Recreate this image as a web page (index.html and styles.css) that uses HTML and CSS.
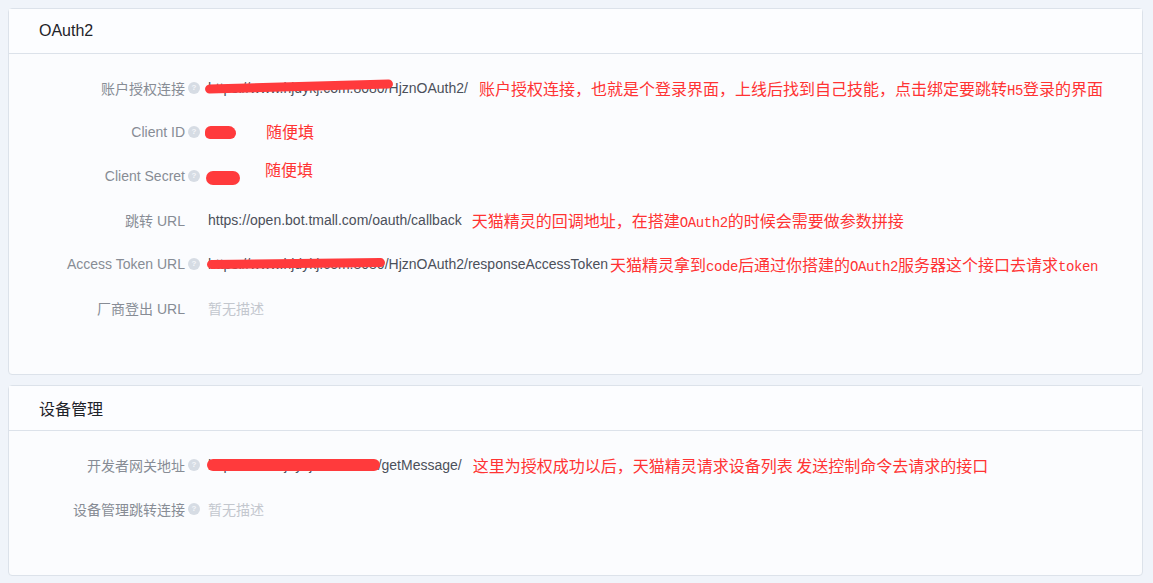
FILE: index.html
```html
<!DOCTYPE html>
<html lang="zh-CN">
<head>
<meta charset="utf-8">
<title>OAuth2</title>
<link rel="stylesheet" href="styles.css">
</head>
<body>
<div class="page">
  <section class="card">
    <div class="card-head">OAuth2</div>
    <div class="card-body">
      <div class="row">
        <div class="label">账户授权连接</div><span class="help">?</span>
        <div class="value"><span class="masked">https://www.hjdykj.com:8080/HjznOAuth2/<i class="scribble s1"></i></span></div>
        <div class="note n1">账户授权连接，也就是个登录界面，上线后找到自己技能，点击绑定要跳转<span class="mono">H5</span>登录的界面</div>
      </div>
      <div class="row">
        <div class="label">Client ID</div><span class="help">?</span>
        <div class="value"><span class="masked blank"><i class="scribble s2"></i></span></div>
        <div class="note n2">随便填</div>
      </div>
      <div class="row">
        <div class="label">Client Secret</div><span class="help">?</span>
        <div class="value"><span class="masked blank"><i class="scribble s3"></i></span></div>
        <div class="note n3">随便填</div>
      </div>
      <div class="row">
        <div class="label">跳转 URL</div><span class="help empty"></span>
        <div class="value">https://open.bot.tmall.com/oauth/callback</div>
        <div class="note n4">天猫精灵的回调地址，在搭建<span class="mono">OAuth2</span>的时候会需要做参数拼接</div>
      </div>
      <div class="row">
        <div class="label">Access Token URL</div><span class="help">?</span>
        <div class="value"><span class="masked">https://www.hjdykj.com:8080<i class="scribble s5"></i></span>/HjznOAuth2/responseAccessToken</div>
        <div class="note n5">天猫精灵拿到<span class="mono">code</span>后通过你搭建的<span class="mono">OAuth2</span>服务器这个接口去请求<span class="mono">token</span></div>
      </div>
      <div class="row">
        <div class="label">厂商登出 URL</div><span class="help empty"></span>
        <div class="value placeholder">暂无描述</div>
      </div>
    </div>
  </section>

  <section class="card">
    <div class="card-head">设备管理</div>
    <div class="card-body">
      <div class="row">
        <div class="label">开发者网关地址</div><span class="help">?</span>
        <div class="value"><span class="masked">http://www.hjdykj.com:8080<i class="scribble s6"></i></span>/getMessage/</div>
        <div class="note n6">这里为授权成功以后，天猫精灵请求设备列表 发送控制命令去请求的接口</div>
      </div>
      <div class="row">
        <div class="label">设备管理跳转连接</div><span class="help">?</span>
        <div class="value placeholder">暂无描述</div>
      </div>
    </div>
  </section>
</div>
</body>
</html>
```

FILE: styles.css
```css
html, body {
  margin: 0;
  padding: 0;
  background: #f0f4fa;
}

.page {
  padding: 8px 10px 8px 8px;
  font-family: "Liberation Sans", "Noto Sans CJK SC", Arial, sans-serif;
  font-size: 14px;
}

.card {
  background: #fbfcfe;
  border: 1px solid #dce2ea;
  border-radius: 4px;
  margin-bottom: 10px;
}

.card:last-child {
  margin-bottom: 0;
}

.card-head {
  height: 44px;
  display: flex;
  align-items: center;
  padding-left: 30px;
  border-bottom: 1px solid #dce2ea;
  font-size: 16px;
  color: #1f2329;
  background: #fcfdff;
}

.card-body {
  padding: 12px 0 44px;
}

.row {
  height: 44px;
  display: flex;
  align-items: center;
  white-space: nowrap;
}

.label {
  width: 176px;
  text-align: right;
  color: #878c95;
  flex: none;
}

.help {
  flex: none;
  width: 12px;
  height: 12px;
  margin-left: 3px;
  border-radius: 50%;
  background: #d6dce4;
  color: #f4f6f9;
  font-size: 8px;
  line-height: 12px;
  text-align: center;
  font-weight: bold;
}

.help.empty {
  background: transparent;
}

.value {
  margin-left: 8px;
  color: #4b505a;
  flex: none;
}

.value.placeholder {
  color: #c3c7ce;
}

.masked {
  position: relative;
  display: inline-block;
}

.masked.blank {
  width: 30px;
  height: 14px;
  vertical-align: middle;
}

.scribble {
  position: absolute;
  display: block;
  background: #ff3a3c;
  border-radius: 8px;
}

.s1 {
  left: -3px;
  top: 2px;
  width: 188px;
  height: 9px;
  transform: rotate(-1.6deg);
}

.s2 {
  left: -3px;
  top: 0;
  width: 31px;
  height: 13px;
  border-radius: 7px 9px 7px 6px;
}

.s3 {
  left: -2px;
  top: 1px;
  width: 34px;
  height: 14px;
  border-radius: 7px;
}

.s5 {
  left: -1px;
  top: 3px;
  width: 178px;
  height: 9px;
  transform: rotate(-0.6deg);
}

.s6 {
  left: -1px;
  top: 2px;
  width: 173px;
  height: 12px;
  border-radius: 6px;
}

.note {
  color: #ff3333;
  font-family: "Noto Sans CJK SC", sans-serif;
  font-size: 16px;
  flex: none;
}

.mono {
  font-family: "Liberation Mono", monospace;
  font-size: 14px;
  letter-spacing: -0.4px;
}

.n1 { margin-left: 11px; }
.n2 { margin-left: 28px; margin-bottom: 2px; }
.n3 { margin-left: 27px; margin-bottom: 14px; }
.n4 { margin-left: 10px; }
.n5 { margin-left: 2px; }
.n6 { margin-left: 11px; }
```
